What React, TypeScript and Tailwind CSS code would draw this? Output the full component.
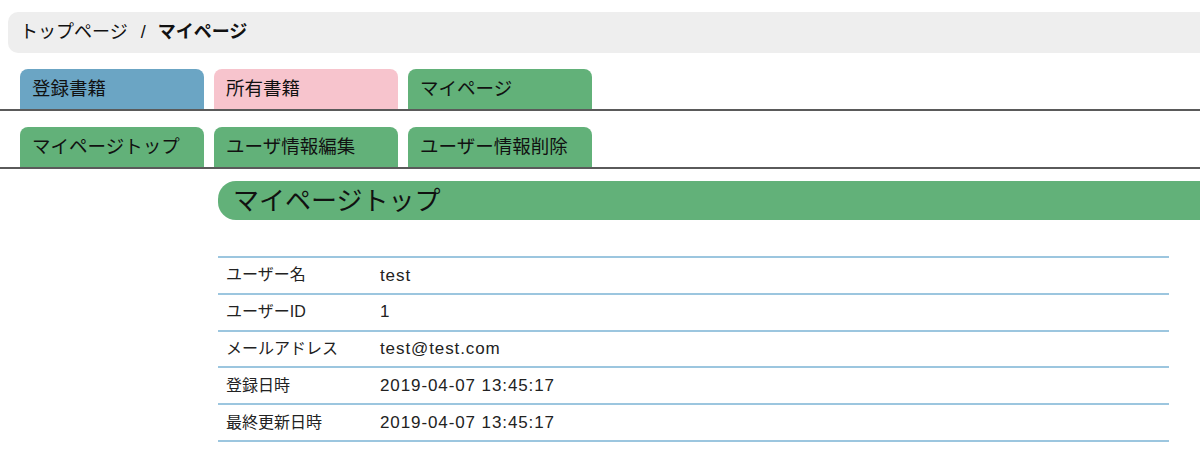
import React from "react";

interface Tab {
  label: string;
  color: string;
}

const mainTabs: Tab[] = [
  { label: "登録書籍", color: "bg-[#6ba5c4]" },
  { label: "所有書籍", color: "bg-[#f7c4cd]" },
  { label: "マイページ", color: "bg-[#62b179]" },
];

const subTabs: Tab[] = [
  { label: "マイページトップ", color: "bg-[#62b179]" },
  { label: "ユーザ情報編集", color: "bg-[#62b179]" },
  { label: "ユーザー情報削除", color: "bg-[#62b179]" },
];

const rows: [string, string][] = [
  ["ユーザー名", "test"],
  ["ユーザーID", "1"],
  ["メールアドレス", "test@test.com"],
  ["登録日時", "2019-04-07 13:45:17"],
  ["最終更新日時", "2019-04-07 13:45:17"],
];

// タブの帯（下に区切り線）
function TabBar({ tabs }: { tabs: Tab[] }) {
  return (
    <div className="mt-4 border-b-2 border-[#5a5a5a]">
      <div className="flex gap-[10px] pl-5">
        {tabs.map((t) => (
          <div
            key={t.label}
            className={`${t.color} w-[184px] h-[40px] rounded-t-[8px] flex items-center pl-3 text-[18.5px] text-[#111]`}
          >
            {t.label}
          </div>
        ))}
      </div>
    </div>
  );
}

export default function App() {
  return (
    <div
      className="w-[1200px] h-[472px] overflow-hidden bg-white text-[#111]"
      style={{ fontFamily: '"Liberation Sans", "Noto Sans CJK JP", sans-serif' }}
    >
      {/* パンくず */}
      <div className="pt-3 pl-2">
        <div className="h-[41px] bg-[#eeeeee] rounded-l-[10px] flex items-center pl-3 text-[18px]">
          <span>トップページ</span>
          <span className="ml-[13px] mr-[12px]">/</span>
          <span className="font-bold">マイページ</span>
        </div>
      </div>

      <TabBar tabs={mainTabs} />
      <TabBar tabs={subTabs} />

      <div className="flex mt-3">
        <div className="w-[218px] shrink-0" />
        <div className="flex-1">
          <h2 className="h-[39px] bg-[#62b179] rounded-l-[18px] flex items-center pl-[15px] text-[26px] leading-none">
            マイページトップ
          </h2>
          <div className="mt-[36px] w-[951px] border-t-2 border-[#9cc6df]">
            {rows.map(([k, v]) => (
              <div
                key={k}
                className="flex h-[36.8px] items-center border-b-2 border-[#9cc6df] text-[16px] text-[#222]"
              >
                <div className="w-[162px] pl-2">{k}</div>
                <div className="text-[17px] tracking-[0.9px]">{v}</div>
              </div>
            ))}
          </div>
        </div>
      </div>
    </div>
  );
}
